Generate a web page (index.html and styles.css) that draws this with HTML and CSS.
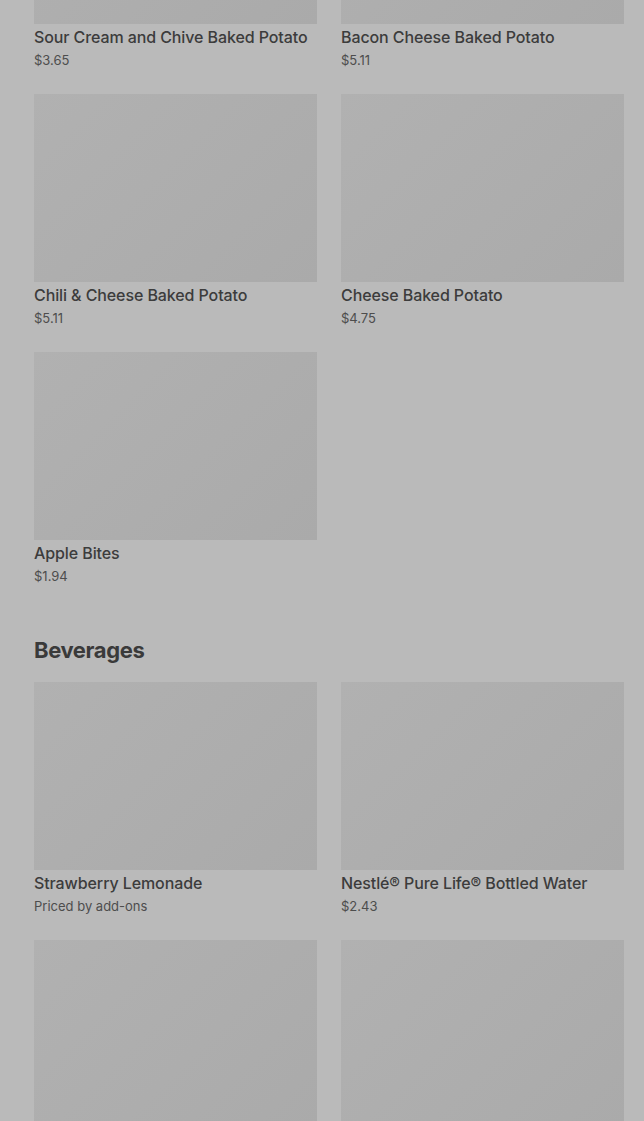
FILE: index.html
```html
<!DOCTYPE html>
<html lang="en">
<head>
    <meta charset="UTF-8">
    <meta name="viewport" content="width=device-width, initial-scale=1.0">
    <title>Menu</title>
    <link rel="stylesheet" href="styles.css">
</head>
<body>
    <div class="menu">
        <section class="section">
            <div class="grid">
                <div class="item">
                    <div class="thumb"></div>
                    <div class="name">Sour Cream and Chive Baked Potato</div>
                    <div class="price">$3.65</div>
                </div>
                <div class="item">
                    <div class="thumb"></div>
                    <div class="name">Bacon Cheese Baked Potato</div>
                    <div class="price">$5.11</div>
                </div>
                <div class="item">
                    <div class="thumb"></div>
                    <div class="name">Chili &amp; Cheese Baked Potato</div>
                    <div class="price">$5.11</div>
                </div>
                <div class="item">
                    <div class="thumb"></div>
                    <div class="name">Cheese Baked Potato</div>
                    <div class="price">$4.75</div>
                </div>
                <div class="item">
                    <div class="thumb"></div>
                    <div class="name">Apple Bites</div>
                    <div class="price">$1.94</div>
                </div>
            </div>
        </section>

        <section class="section">
            <h2 class="section-title">Beverages</h2>
            <div class="grid">
                <div class="item">
                    <div class="thumb"></div>
                    <div class="name">Strawberry Lemonade</div>
                    <div class="price">Priced by add-ons</div>
                </div>
                <div class="item">
                    <div class="thumb"></div>
                    <div class="name">Nestlé® Pure Life® Bottled Water</div>
                    <div class="price">$2.43</div>
                </div>
                <!-- next row, below the fold -->
                <div class="item">
                    <div class="thumb"></div>
                </div>
                <div class="item">
                    <div class="thumb"></div>
                </div>
            </div>
        </section>
    </div>
</body>
</html>
```

FILE: styles.css
```css
* {
    margin: 0;
    padding: 0;
    box-sizing: border-box;
}

body {
    background: #bababa;
    color: #3b3b3b;
    font-family: 'Inter', 'Noto Sans', sans-serif;
    overflow: hidden;
}

/* page is scrolled, first row image is cut off */
.menu {
    margin-top: -164px;
    padding: 0 20px 0 34px;
    display: flex;
    flex-direction: column;
    gap: 48px;
}

.section-title {
    font-size: 22px;
    line-height: 32px;
    font-weight: 700;
    letter-spacing: -0.4px;
    color: #3a3a3a;
    margin-bottom: 16px;
}

.grid {
    display: grid;
    grid-template-columns: 283px 283px;
    column-gap: 24px;
    row-gap: 24px;
}

.thumb {
    height: 188px;
    background: linear-gradient(135deg, #b1b1b1, #aaaaaa);
}

.name {
    margin-top: 3px;
    font-size: 16px;
    line-height: 20px;
    font-weight: 500;
    letter-spacing: -0.1px;
    color: #3c3c3c;
    white-space: nowrap;
}

.price {
    margin-top: 3px;
    font-size: 13px;
    line-height: 20px;
    color: #4d4d4d;
}
```
